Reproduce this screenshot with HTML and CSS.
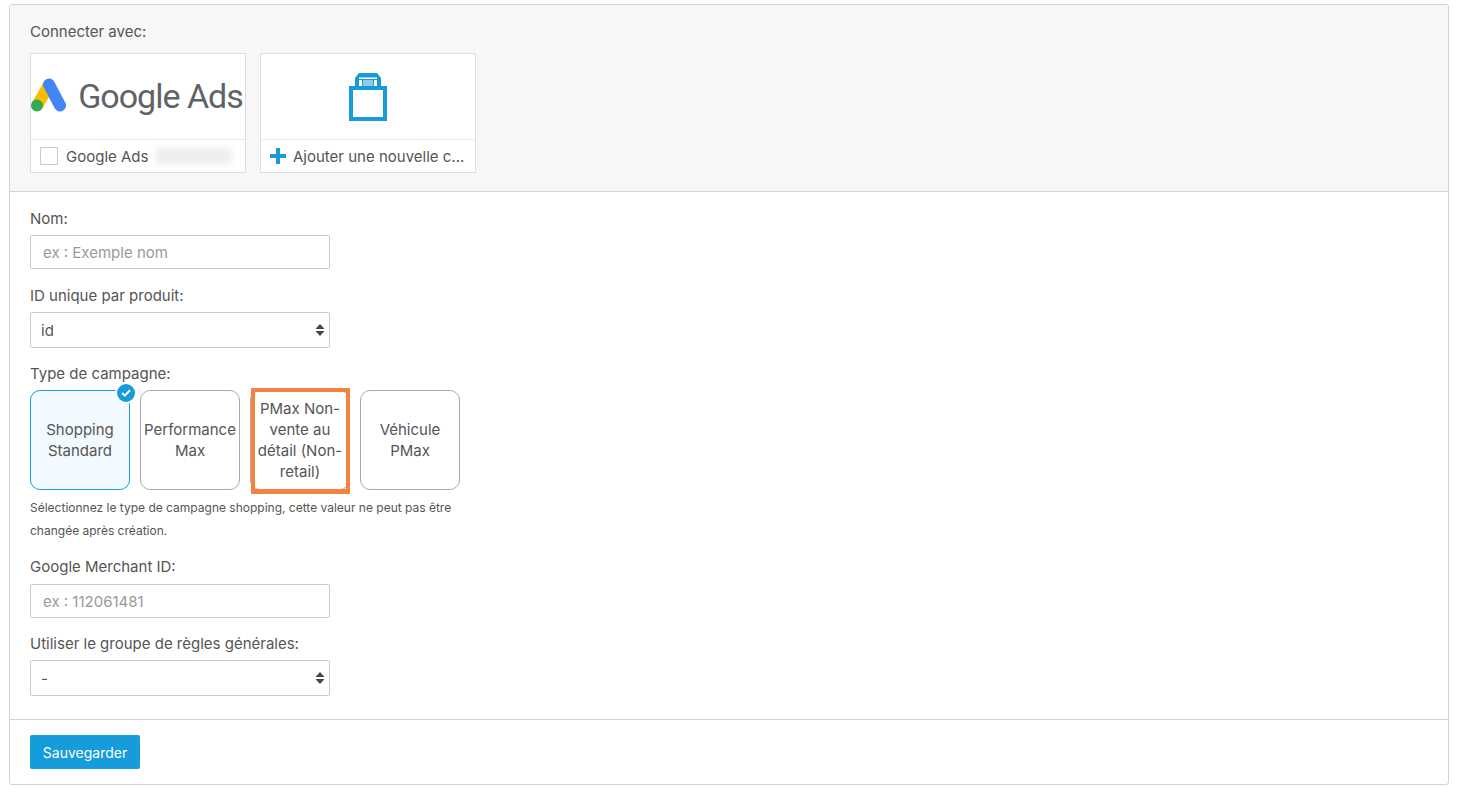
FILE: index.html
```html
<!doctype html>
<html lang="fr">
<head>
<meta charset="utf-8">
<title>Connecter avec</title>
<link rel="stylesheet" href="styles.css">
</head>

<body>

<div class="box">

  <!-- connect panel -->
  <section class="connect">
    <div class="label">Connecter avec:</div>
    <div class="connect-row">

      <div class="account">
        <div class="account-logo">
          <svg class="ads-mark" width="36" height="34" viewBox="0 0 36 34">
            <line x1="18" y1="7" x2="6.5" y2="27" stroke="#fbbc04" stroke-width="12"/>
            <line x1="18" y1="6.5" x2="29" y2="27.5" stroke="#4285f4" stroke-width="12" stroke-linecap="round"/>
            <circle cx="6" cy="27.5" r="6" fill="#34a853"/>
          </svg>
          <span class="ads-name">Google Ads</span>
        </div>
        <div class="account-foot">
          <span class="check"></span>
          <span class="account-text">Google Ads</span>
          <span class="blurred"></span>
        </div>
      </div>

      <div class="account">
        <div class="account-logo">
          <svg width="38" height="48" viewBox="0 0 38 48">
            <path d="M6 13V5l4-5h18l4 5v8z" fill="#189ad6"/>
            <path d="M10 4.5h18v1.5H10zM10 7h3v6h-3zM25 7h3v6h-3z" fill="#fff"/>
            <path d="M14 7h10v6H14z" fill="#8ccdeb"/>
            <rect x="2" y="15" width="34" height="31" fill="#fff" stroke="#189ad6" stroke-width="4"/>
          </svg>
        </div>
        <div class="account-foot">
          <svg class="plus" width="16" height="16" viewBox="0 0 16 16">
            <path d="M6 0h4v6h6v4h-6v6H6v-6H0V6h6z" fill="#189ad6"/>
          </svg>
          <span class="account-text">Ajouter une nouvelle c...</span>
        </div>
      </div>

    </div>
  </section>

  <!-- form -->
  <form class="form">
    <div class="field field-nom">
      <label class="label">Nom:</label>
      <input class="control" type="text" placeholder="ex : Exemple nom">
    </div>

    <div class="field">
      <label class="label">ID unique par produit:</label>
      <div class="select-wrap">
        <select class="control select">
          <option>id</option>
        </select>
        <svg class="updown" width="10" height="14" viewBox="0 0 10 14">
          <path d="M5 1l4.5 5h-9zM5 13L.5 8h9z" fill="#444"/>
        </svg>
      </div>
    </div>

    <div class="field field-type">
      <label class="label">Type de campagne:</label>
      <div class="types">
        <div class="type type-on">
          Shopping Standard
          <span class="type-badge">
            <svg width="10" height="8" viewBox="0 0 10 8">
              <path d="M1 4l2.8 2.6L9 1.2" fill="none" stroke="#fff" stroke-width="2"/>
            </svg>
          </span>
        </div>
        <div class="type">Performance Max</div>
        <div class="type">
          PMax Non-vente au détail (Non-retail)
          <span class="highlight"></span>
        </div>
        <div class="type">Véhicule PMax</div>
      </div>
      <p class="help">Sélectionnez le type de campagne shopping, cette valeur ne peut pas être changée après création.</p>
    </div>

    <div class="field field-merchant">
      <label class="label">Google Merchant ID:</label>
      <input class="control" type="text" placeholder="ex : 112061481">
    </div>

    <div class="field">
      <label class="label">Utiliser le groupe de règles générales:</label>
      <div class="select-wrap">
        <select class="control select">
          <option>-</option>
        </select>
        <svg class="updown" width="10" height="14" viewBox="0 0 10 14">
          <path d="M5 1l4.5 5h-9zM5 13L.5 8h9z" fill="#444"/>
        </svg>
      </div>
    </div>
  </form>

  <footer class="foot">
    <button class="btn" type="button">Sauvegarder</button>
  </footer>

</div>

</body>
</html>
```

FILE: styles.css
```css
:root{
  --txt:    #555;
  --muted:  #999;
  --line:   #d2d2d2;
  --accent: #169bdb;
}

* {
  box-sizing: border-box;
  margin: 0;
  padding: 0;
}
html, body {
  height: 100%;
  overflow: hidden;
}
body {
  font-family: 'Inter', sans-serif;
  font-size: 15px;
  line-height: 21px;
  color: var(--txt);
  background: #fff;
  padding: 4px 17px 0 9px;
}

.box {
  border: 1px solid var(--line);
  border-radius: 3px;
}

.label {
  display: block;
  margin-bottom: 6px;
}

/* ── connect panel ─────────────────────────────────────────────── */
.connect {
  background: #f7f7f7;
  border-bottom: 1px solid var(--line);
  padding: 16px 20px 18px;
}
.connect .label {
  margin-bottom: 11px;
}
.connect-row {
  display: flex;
  gap: 14px;
}
.account {
  width: 216px;
  height: 120px;
  background: #fff;
  border: 1px solid #ddd;
  display: flex;
  flex-direction: column;
}
.account-logo {
  height: 86px;
  border-bottom: 1px solid #e8e8e8;
  display: flex;
  align-items: center;
  justify-content: center;
}
.ads-mark {
  margin: -3px 11px 0 -2px;
}
.ads-name {
  font-family: 'Roboto', sans-serif;
  font-size: 34px;
  letter-spacing: -1px;
  color: #5f6368;
  white-space: nowrap;
}
.account-foot {
  flex: 1;
  display: flex;
  align-items: center;
  padding: 0 9px;
  gap: 8px;
  min-width: 0;
}
.check {
  flex: none;
  width: 18px;
  height: 18px;
  border: 1px solid #ccc;
  background: #fff;
}
.account-text {
  white-space: nowrap;
}
.plus {
  flex: none;
  margin-right: -1px;
}
.blurred {
  width: 76px;
  height: 16px;
  background: #eee;
  filter: blur(3px);
}

/* ── form ──────────────────────────────────────────────────────── */
.form {
  padding: 16px 20px 23px;
}
.field {
  margin-bottom: 15px;
}
.field:last-child {
  margin-bottom: 0;
}
.field-nom {
  margin-bottom: 16px;
}
.field-type {
  margin-bottom: 14px;
}
.field-merchant .label {
  margin-bottom: 7px;
}
.control {
  display: block;
  width: 300px;
  height: 34px;
  padding: 0 12px;
  font: inherit;
  color: var(--txt);
  background: #fff;
  border: 1px solid #ccc;
  border-radius: 2px;
  outline: none;
}
.control::placeholder {
  color: var(--muted);
  opacity: 1;
}
.select-wrap {
  position: relative;
  width: 300px;
}
.select {
  height: 36px;
  appearance: none;
  -webkit-appearance: none;
  padding: 0 10px;
}
.updown {
  position: absolute;
  right: 5px;
  top: 11px;
}

.types {
  display: flex;
  gap: 10px;
}
.type {
  position: relative;
  width: 100px;
  height: 100px;
  padding: 0 3px;
  border: 1px solid #aaa;
  border-radius: 10px;
  display: flex;
  align-items: center;
  justify-content: center;
  text-align: center;
}
.type-on {
  background: #f3faff;
  border-color: var(--accent);
}
.type-badge {
  position: absolute;
  top: -9px;
  right: -8px;
  width: 22px;
  height: 22px;
  border: 2px solid #fff;
  border-radius: 50%;
  background: var(--accent);
  display: flex;
  align-items: center;
  justify-content: center;
}
.highlight {
  position: absolute;
  left: 0;
  right: -1px;
  top: -3px;
  bottom: -5px;
  border: 4px solid #f58240;
  border-bottom-width: 5px;
  border-radius: 1px;
}
.help {
  width: 430px;
  margin-top: 6px;
  font-size: 12px;
  line-height: 23px;
}

/* ── footer ────────────────────────────────────────────────────── */
.foot {
  border-top: 1px solid var(--line);
  padding: 15px 20px;
}
.btn {
  display: block;
  width: 110px;
  height: 34px;
  background: var(--accent);
  color: #fff;
  border: 0;
  border-radius: 2px;
  font: inherit;
  font-size: 14px;
}
```
